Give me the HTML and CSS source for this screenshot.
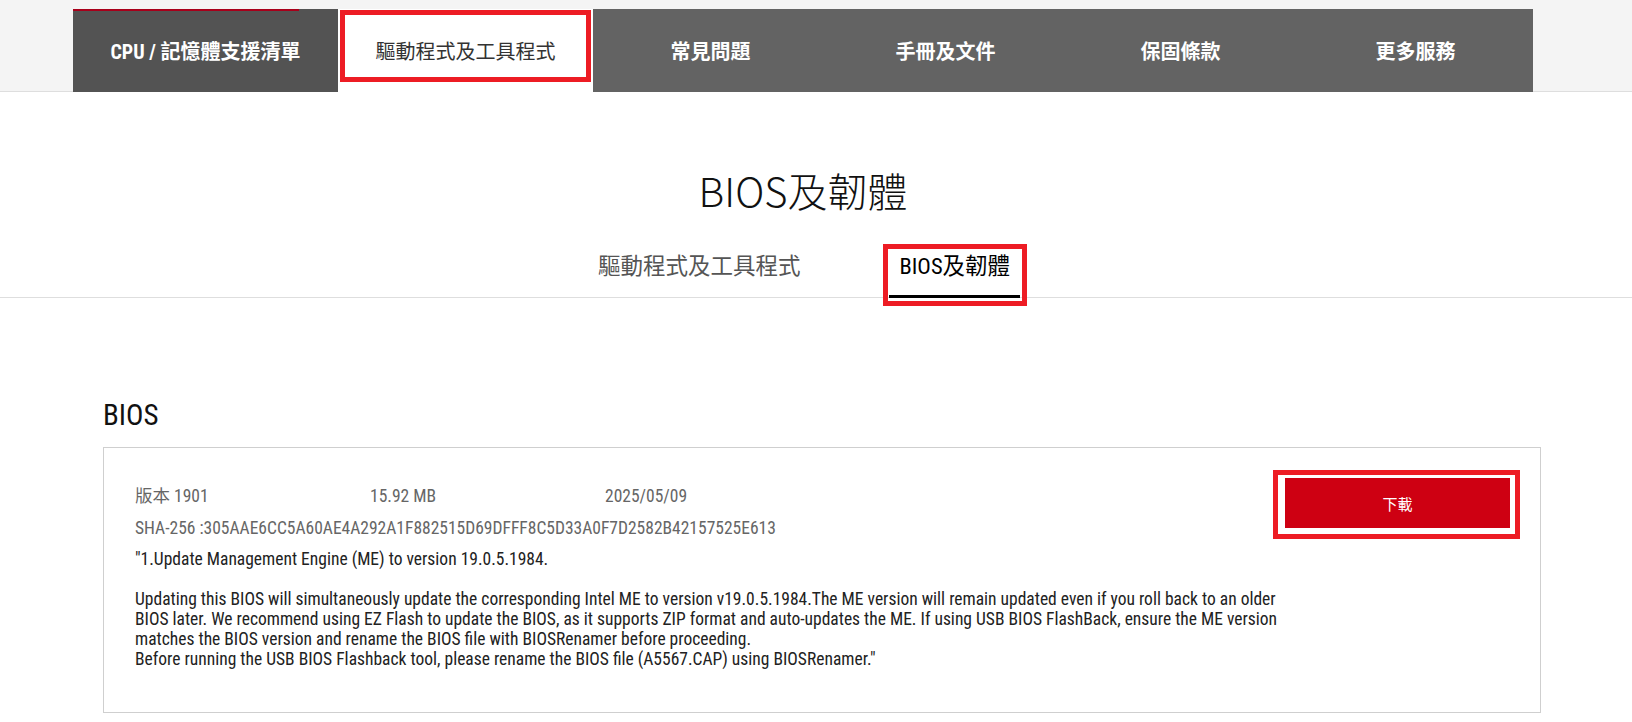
FILE: index.html
```html
<!DOCTYPE html>
<html lang="zh-Hant">
<head>
  <meta charset="UTF-8">
  <meta name="viewport" content="width=device-width, initial-scale=1.0">
  <title>BIOS及韌體</title>
  <link rel="stylesheet" href="styles.css">
</head>
<body>
  <header class="support-header">
    <nav class="support-tabs">
      <a class="support-tab is-dark" href="#">CPU / 記憶體支援清單</a>
      <a class="support-tab is-current" href="#">驅動程式及工具程式</a>
      <a class="support-tab" href="#">常見問題</a>
      <a class="support-tab" href="#">手冊及文件</a>
      <a class="support-tab" href="#">保固條款</a>
      <a class="support-tab" href="#">更多服務</a>
    </nav>
  </header>

  <main>
    <h1 class="page-title">BIOS及韌體</h1>

    <div class="sub-tabs">
      <a class="sub-tab" href="#">驅動程式及工具程式</a>
      <a class="sub-tab is-active" href="#">BIOS及韌體</a>
    </div>

    <section class="bios-section">
      <h2 class="bios-heading">BIOS</h2>
      <div class="bios-card">
        <div class="bios-info">
          <div class="bios-meta">
            <span>版本 1901</span>
            <span>15.92 MB</span>
            <span>2025/05/09</span>
          </div>
          <div class="bios-sha">SHA-256 :305AAE6CC5A60AE4A292A1F882515D69DFFF8C5D33A0F7D2582B42157525E613</div>
          <div class="bios-desc">"1.Update Management Engine (ME) to version 19.0.5.1984.<br><br>Updating this BIOS will simultaneously update the corresponding Intel ME to version v19.0.5.1984.The ME version will remain updated even if you roll back to an older BIOS later. We recommend using EZ Flash to update the BIOS, as it supports ZIP format and auto-updates the ME. If using USB BIOS FlashBack, ensure the ME version matches the BIOS version and rename the BIOS file with BIOSRenamer before proceeding.<br>Before running the USB BIOS Flashback tool, please rename the BIOS file (A5567.CAP) using BIOSRenamer."</div>
        </div>
        <div class="bios-action">
          <button class="download-btn">下載</button>
        </div>
      </div>
    </section>
  </main>
</body>
</html>
```

FILE: styles.css
```css
* {
  box-sizing: border-box;
}

body {
  margin: 0;
  font-family: "Roboto Condensed", "Liberation Sans Narrow", "Noto Sans CJK TC", sans-serif;
  color: #333;
  background: #fff;
}

a {
  text-decoration: none;
  color: inherit;
}

/* top support tabs */
.support-header {
  height: 92px;
  padding-top: 9px;
  background: #f4f4f4;
  border-bottom: 1px solid #dedede;
}

.support-tabs {
  display: grid;
  grid-template-columns: 265px 255px repeat(4, 1fr);
  width: 1460px;
  height: 83px;
  margin-left: 73px;
}

.support-tab {
  position: relative;
  display: flex;
  align-items: center;
  justify-content: center;
  background: #636363;
  color: #fff;
  font-size: 20px;
  font-weight: 700;
}

.support-tab.is-dark {
  background: #535353;
}

.support-tab.is-dark::before {
  content: "";
  position: absolute;
  top: 0;
  left: 0;
  width: 226px;
  height: 2px;
  background: #a8001a;
}

.support-tab.is-current {
  background: #fff;
  color: #333;
  font-weight: 400;
}

.support-tab.is-current::after {
  content: "";
  position: absolute;
  top: 1px;
  right: 2px;
  bottom: 10px;
  left: 2px;
  border: 5px solid #ed1c24;
}

/* title + sub tabs */
.page-title {
  margin: 70px 0 0 73px;
  width: 1460px;
  font-family: "Noto Sans CJK TC", sans-serif;
  font-size: 40px;
  font-weight: 300;
  line-height: 56px;
  text-align: center;
  color: #111;
}

.sub-tabs {
  display: flex;
  justify-content: center;
  gap: 79px;
  margin-top: 33px;
  padding-right: 24px;
  border-bottom: 1px solid #dedede;
}

.sub-tab {
  position: relative;
  margin-bottom: -1px;
  padding: 0 10px 14px;
  border-bottom: 3px solid transparent;
  font-size: 22.5px;
  line-height: 30px;
  color: #555;
}

.sub-tab.is-active {
  border-bottom-color: #000;
  color: #000;
}

.sub-tab.is-active::after {
  content: "";
  position: absolute;
  top: -7px;
  right: -7px;
  bottom: -11px;
  left: -6px;
  border: 5px solid #ed1c24;
}

/* BIOS list */
.bios-section {
  width: 1438px;
  margin: 99px 0 0 103px;
}

.bios-heading {
  margin: 0 0 14px;
  font-size: 29px;
  font-weight: 400;
  line-height: 36px;
  color: #111;
}

.bios-card {
  display: flex;
  padding: 30px 30px 43px 31px;
  border: 1px solid #cfcfcf;
}

.bios-info {
  flex: 1;
  padding-top: 8px;
  font-size: 17.5px;
  line-height: 20px;
}

.bios-meta {
  display: flex;
  color: #666;
}

.bios-meta span {
  width: 235px;
}

.bios-sha {
  margin-top: 12px;
  color: #666;
}

.bios-desc {
  margin-top: 11px;
  color: #222;
}

.bios-action {
  flex: 0 0 225px;
}

.download-btn {
  position: relative;
  width: 225px;
  height: 50px;
  border: none;
  background: #ce0012;
  color: #fff;
  font-family: "Noto Sans CJK TC", sans-serif;
  font-size: 15px;
  cursor: pointer;
}

.download-btn::after {
  content: "";
  position: absolute;
  top: -8px;
  right: -10px;
  bottom: -11px;
  left: -12px;
  border: 5px solid #ed1c24;
}
```
